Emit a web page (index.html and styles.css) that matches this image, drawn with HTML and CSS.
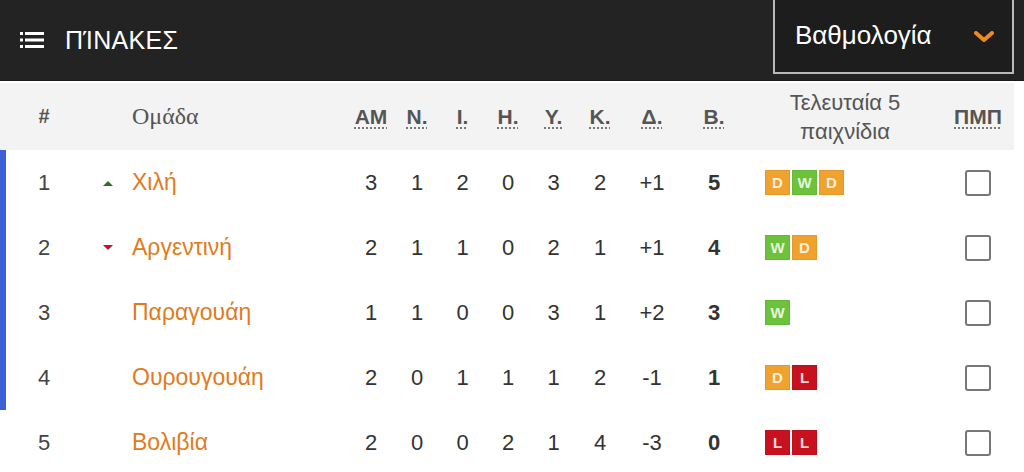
FILE: index.html
```html
<!DOCTYPE html>
<html lang="el">
<head>
<meta charset="utf-8">
<title>Πίνακες</title>
<link rel="stylesheet" href="styles.css">
</head>
<body>
<header class="topbar">
  <div class="title">
    <svg class="menu-icon" width="24" height="18" viewBox="0 0 24 18">
      <rect x="0" y="1" width="3" height="3" fill="#fff"/>
      <rect x="5" y="1" width="19" height="3" fill="#fff"/>
      <rect x="0" y="7.5" width="3" height="3" fill="#fff"/>
      <rect x="5" y="7.5" width="19" height="3" fill="#fff"/>
      <rect x="0" y="14" width="3" height="3" fill="#fff"/>
      <rect x="5" y="14" width="19" height="3" fill="#fff"/>
    </svg>
    <span class="title-text">ΠΊΝΑΚΕΣ</span>
  </div>
  <div class="select">
    <span>Βαθμολογία</span>
    <svg class="chev" width="20" height="12" viewBox="0 0 20 12">
      <path d="M2 2 L10 9 L18 2" fill="none" stroke="#f08a1c" stroke-width="4" stroke-linecap="round" stroke-linejoin="round"/>
    </svg>
  </div>
</header>
<div class="gap"></div>
<div class="table">
  <div class="row head">
    <div class="c pos hb">#</div>
    <div class="c arrow"></div>
    <div class="c team team-h">Ομάδα</div>
    <div class="c num"><abbr>ΑΜ</abbr></div>
    <div class="c num"><abbr>Ν.</abbr></div>
    <div class="c num"><abbr>Ι.</abbr></div>
    <div class="c num"><abbr>Η.</abbr></div>
    <div class="c num"><abbr>Υ.</abbr></div>
    <div class="c num"><abbr>Κ.</abbr></div>
    <div class="c num"><abbr>Δ.</abbr></div>
    <div class="c num"><abbr>Β.</abbr></div>
    <div class="c form-h">Τελευταία 5<br>παιχνίδια</div>
    <div class="c pmp"><abbr>ΠΜΠ</abbr></div>
  </div>

  <div class="row q">
    <div class="c pos">1</div>
    <div class="c arrow"><span class="up"></span></div>
    <div class="c team">Χιλή</div>
    <div class="c num">3</div><div class="c num">1</div><div class="c num">2</div><div class="c num">0</div>
    <div class="c num">3</div><div class="c num">2</div><div class="c num">+1</div><div class="c num pts">5</div>
    <div class="c form"><span class="b d">D</span><span class="b w">W</span><span class="b d">D</span></div>
    <div class="c pmp"><span class="box"></span></div>
  </div>

  <div class="row q">
    <div class="c pos">2</div>
    <div class="c arrow"><span class="down"></span></div>
    <div class="c team">Αργεντινή</div>
    <div class="c num">2</div><div class="c num">1</div><div class="c num">1</div><div class="c num">0</div>
    <div class="c num">2</div><div class="c num">1</div><div class="c num">+1</div><div class="c num pts">4</div>
    <div class="c form"><span class="b w">W</span><span class="b d">D</span></div>
    <div class="c pmp"><span class="box"></span></div>
  </div>

  <div class="row q">
    <div class="c pos">3</div>
    <div class="c arrow"></div>
    <div class="c team">Παραγουάη</div>
    <div class="c num">1</div><div class="c num">1</div><div class="c num">0</div><div class="c num">0</div>
    <div class="c num">3</div><div class="c num">1</div><div class="c num">+2</div><div class="c num pts">3</div>
    <div class="c form"><span class="b w">W</span></div>
    <div class="c pmp"><span class="box"></span></div>
  </div>

  <div class="row q">
    <div class="c pos">4</div>
    <div class="c arrow"></div>
    <div class="c team">Ουρουγουάη</div>
    <div class="c num">2</div><div class="c num">0</div><div class="c num">1</div><div class="c num">1</div>
    <div class="c num">1</div><div class="c num">2</div><div class="c num">-1</div><div class="c num pts">1</div>
    <div class="c form"><span class="b d">D</span><span class="b l">L</span></div>
    <div class="c pmp"><span class="box"></span></div>
  </div>

  <div class="row">
    <div class="c pos">5</div>
    <div class="c arrow"></div>
    <div class="c team">Βολιβία</div>
    <div class="c num">2</div><div class="c num">0</div><div class="c num">0</div><div class="c num">2</div>
    <div class="c num">1</div><div class="c num">4</div><div class="c num">-3</div><div class="c num pts">0</div>
    <div class="c form"><span class="b l">L</span><span class="b l">L</span></div>
    <div class="c pmp"><span class="box"></span></div>
  </div>
</div>
</body>
</html>
```

FILE: styles.css
```css
* { box-sizing: border-box; }
html, body { margin: 0; padding: 0; background: #fff; }
body {
  font-family: "Liberation Sans", Arial, sans-serif;
  color: #333;
  overflow: hidden;
  width: 1024px;
  height: 472px;
}

.topbar {
  height: 81px;
  background: #232323;
  border-bottom: 1px solid #1a1a1a;
  display: flex;
  align-items: flex-start;
  padding-right: 10px;
}
.title {
  display: flex;
  align-items: center;
  height: 80px;
  padding-left: 20px;
}
.menu-icon { display: block; margin-right: 21px; }
.title-text {
  color: #fff;
  font-size: 25px;
  letter-spacing: 0.3px;
}
.select {
  margin-left: auto;
  margin-top: -2px;
  width: 241px;
  height: 76px;
  border: 2px solid #b9b9b9;
  background: #1d1d1d;
  display: flex;
  align-items: center;
  padding: 0 18px 2px 20px;
  color: #fff;
  font-size: 26px;
}
.select .chev { margin-left: auto; margin-top: 4px; }

.gap { height: 2px; background: #fff; }

.table { width: 1014px; }
.row {
  display: grid;
  grid-template-columns: 88px 40px 220px 46px 46px 45px 46px 45px 48px 56px 68px 194px 72px;
  height: 65px;
  align-items: center;
  position: relative;
}
.row.q::before {
  content: "";
  position: absolute;
  left: 0; top: 0; bottom: 0;
  width: 6px;
  background: #3a5fd6;
}
.row.head {
  height: 67px;
  background: #f3f3f3;
  color: #555;
}
.c { text-align: center; font-size: 22px; }
.pos { color: #444; }
.hb { font-weight: bold; font-size: 20px; color: #555; }
.team { text-align: left; padding-left: 4px; color: #e07b20; font-size: 23px; }
.team-h {
  color: #555;
  font-family: "Liberation Serif", "Times New Roman", serif;
  font-size: 24px;
}
.head .num, .head .pmp { font-weight: bold; font-size: 21px; }
abbr {
  color: #555;
  text-decoration: underline dotted #777;
  text-decoration-thickness: 2px;
  text-underline-offset: 4px;
}
.pts { font-weight: bold; }
.form-h { font-size: 22px; line-height: 29px; color: #555; }
.form { text-align: left; padding-left: 17px; display: flex; gap: 2px; }
.b {
  width: 25px;
  height: 25px;
  display: inline-flex;
  align-items: center;
  justify-content: center;
  color: rgba(255,255,255,0.85);
  font-size: 15px;
  font-weight: bold;
  border: 1px solid rgba(0,0,0,0.05);
}
.b.d { background: #f0a22e; }
.b.w { background: #6cc23a; }
.b.l { background: #c8111f; }

.arrow { display: flex; justify-content: center; padding-left: 0; }
.up {
  width: 0; height: 0;
  border-left: 5px solid transparent;
  border-right: 5px solid transparent;
  border-bottom: 5px solid #2e6e2e;
  margin-top: 2px;
}
.down {
  width: 0; height: 0;
  border-left: 5px solid transparent;
  border-right: 5px solid transparent;
  border-top: 5px solid #c8102e;
}

.pmp { display: flex; justify-content: center; }
.head .pmp { display: block; }
.box {
  width: 26px;
  height: 26px;
  border: 2px solid #777;
  border-radius: 3px;
  background: #fff;
  display: block;
}
```
